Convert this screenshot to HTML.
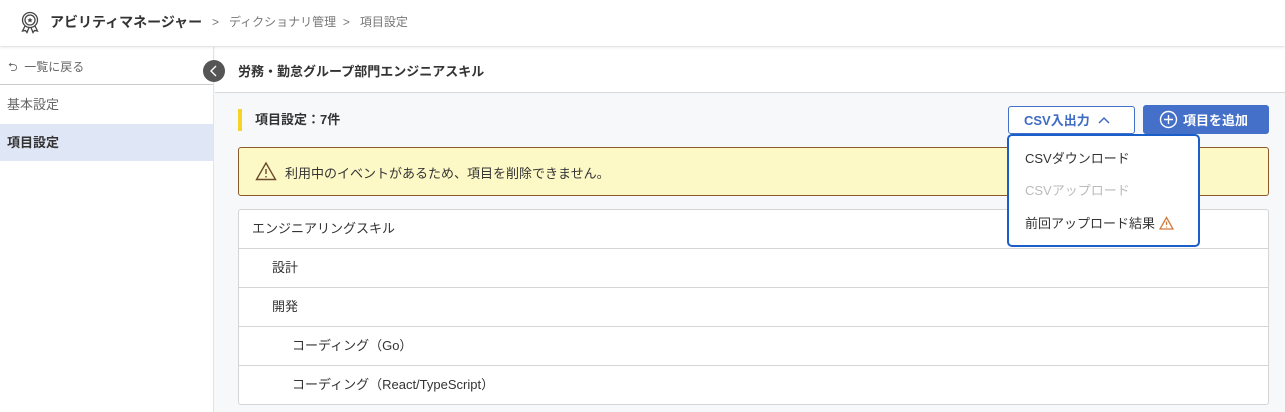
<!DOCTYPE html>
<html><head><meta charset="utf-8"><style>
*{box-sizing:border-box;margin:0;padding:0}
body{width:1285px;height:412px;overflow:hidden;font-family:"Liberation Sans","Noto Sans CJK JP",sans-serif;background:#f7f8fa;position:relative;color:#333}
.hdr{position:absolute;left:0;top:0;width:1285px;height:46px;background:#fff;box-shadow:0 1px 3px rgba(0,0,0,.12);z-index:2}
.hdr .t{position:absolute;left:50px;top:12px;font-size:14px;font-weight:bold;color:#333}
.hdr .bc{position:absolute;left:212px;top:13px;font-size:12px;color:#777}
.side{position:absolute;left:0;top:47px;width:214px;height:365px;background:#fff;border-right:1px solid #e3e3e3}
.back{height:38px;border-bottom:1px solid #ccc;font-size:12px;color:#666;padding:11px 0 0 8px}
.item{height:39px;font-size:13px;padding:9px 0 0 7px;color:#666}
.item.act{background:#dfe6f5;color:#333;font-weight:bold;height:37px;padding-top:8px}
.tog{position:absolute;left:203px;top:60px;width:22px;height:22px;border-radius:50%;background:#555;z-index:3}
.tbar{position:absolute;left:215px;top:47px;width:1070px;height:46px;background:#fff;border-bottom:1px solid #d8d8d8}
.tbar span{position:absolute;left:23px;top:14px;font-size:13px;font-weight:bold;color:#333}
.sec{position:absolute;left:238px;top:109px;height:22px;border-left:4px solid #f5d327;padding:0 0 0 13px;font-size:13px;font-weight:bold}
.warn{position:absolute;left:238px;top:147px;width:1031px;height:49px;background:#fdf9c7;border:1px solid #8a5a2b;border-radius:3px;font-size:13px;padding:15px 0 0 46px;color:#333}
.tbl{position:absolute;left:238px;top:209px;width:1031px;height:196px;background:#fff;border:1px solid #d5d5d5;border-radius:3px}
.row{height:39px;border-bottom:1px solid #d5d5d5;font-size:13px;padding:8px 0 0 13px}
.row:last-child{border-bottom:none}
.csv{position:absolute;left:1008px;top:106px;width:127px;height:28px;border:1px solid #4470c9;border-radius:3px;background:#fff;color:#3f6bc4;font-size:13px;font-weight:bold;padding:3px 0 0 15px}
.add{position:absolute;left:1143px;top:105px;width:126px;height:29px;border-radius:3px;background:#4470c9;color:#fff;font-size:13px;font-weight:bold;padding:5px 0 0 40px}
.dd{position:absolute;left:1007px;top:134px;width:193px;height:113px;background:#fff;border:2px solid #1a5fc9;border-radius:5px;font-size:13px;z-index:4}
.dd div{position:absolute;left:16px}
</style></head><body>
<div class="hdr">
<svg style="position:absolute;left:20px;top:11px" width="20" height="24" viewBox="0 0 20 24" fill="none" stroke="#444" stroke-width="1.3"><circle cx="10" cy="9" r="7.5"/><circle cx="10" cy="9" r="5"/><path d="M10 6.5l.8 1.7 1.8.2-1.3 1.2.4 1.8-1.7-.9-1.7.9.4-1.8-1.3-1.2 1.8-.2z" fill="#444" stroke="none"/><path d="M5 15l-2.5 5 3-.5 1.5 2 2-5M15 15l2.5 5-3-.5-1.5 2-2-5"/></svg>
<span class="t">アビリティマネージャー</span>
<span class="bc">&gt;&nbsp;&nbsp; ディクショナリ管理 &nbsp;&gt;&nbsp;&nbsp; 項目設定</span>
</div>
<div class="side">
<div class="back">⮌ &nbsp;一覧に戻る</div>
<div class="item">基本設定</div>
<div class="item act">項目設定</div>
</div>
<div class="tog"><svg width="22" height="22"><path d="M13 6l-5 5 5 5" stroke="#fff" stroke-width="1.4" fill="none"/></svg></div>
<div class="tbar"><span>労務・勤怠グループ部門エンジニアスキル</span></div>
<div class="sec">項目設定：7件</div>
<div class="warn"><svg style="position:absolute;left:16px;top:13px" width="22" height="20" viewBox="0 0 22 20" fill="none" stroke="#6b4a2a" stroke-width="1.4"><path d="M11 2L1.5 18.5h19z"/><path d="M11 8v5M11 15v1.5"/></svg>利用中のイベントがあるため、項目を削除できません。</div>
<div class="tbl">
<div class="row">エンジニアリングスキル</div>
<div class="row" style="padding-left:33px">設計</div>
<div class="row" style="padding-left:33px">開発</div>
<div class="row" style="padding-left:53px">コーディング（Go）</div>
<div class="row" style="padding-left:53px">コーディング（React/TypeScript）</div>
</div>
<div class="csv">CSV入出力 <svg width="14" height="10" style="margin-left:4px"><path d="M2 8l5-5 5 5" stroke="#3f6bc4" stroke-width="1.5" fill="none"/></svg></div>
<div class="add"><svg style="position:absolute;left:16px;top:5px" width="19" height="19"><circle cx="9.5" cy="9.5" r="8" stroke="#fff" stroke-width="1.4" fill="none"/><path d="M9.5 5v9M5 9.5h9" stroke="#fff" stroke-width="1.4"/></svg>項目を追加</div>
<div class="dd">
<div style="top:12px;color:#333">CSVダウンロード</div>
<div style="top:44px;color:#bbb">CSVアップロード</div>
<div style="top:77px;color:#333">前回アップロード結果 <svg width="15" height="14" style="vertical-align:-2px" viewBox="0 0 15 14" fill="none" stroke="#d07a3a" stroke-width="1.3"><path d="M7.5 1.5L1 13h13z"/><path d="M7.5 5.5v3.5M7.5 10.5v1"/></svg></div>
</div>
</body></html>
